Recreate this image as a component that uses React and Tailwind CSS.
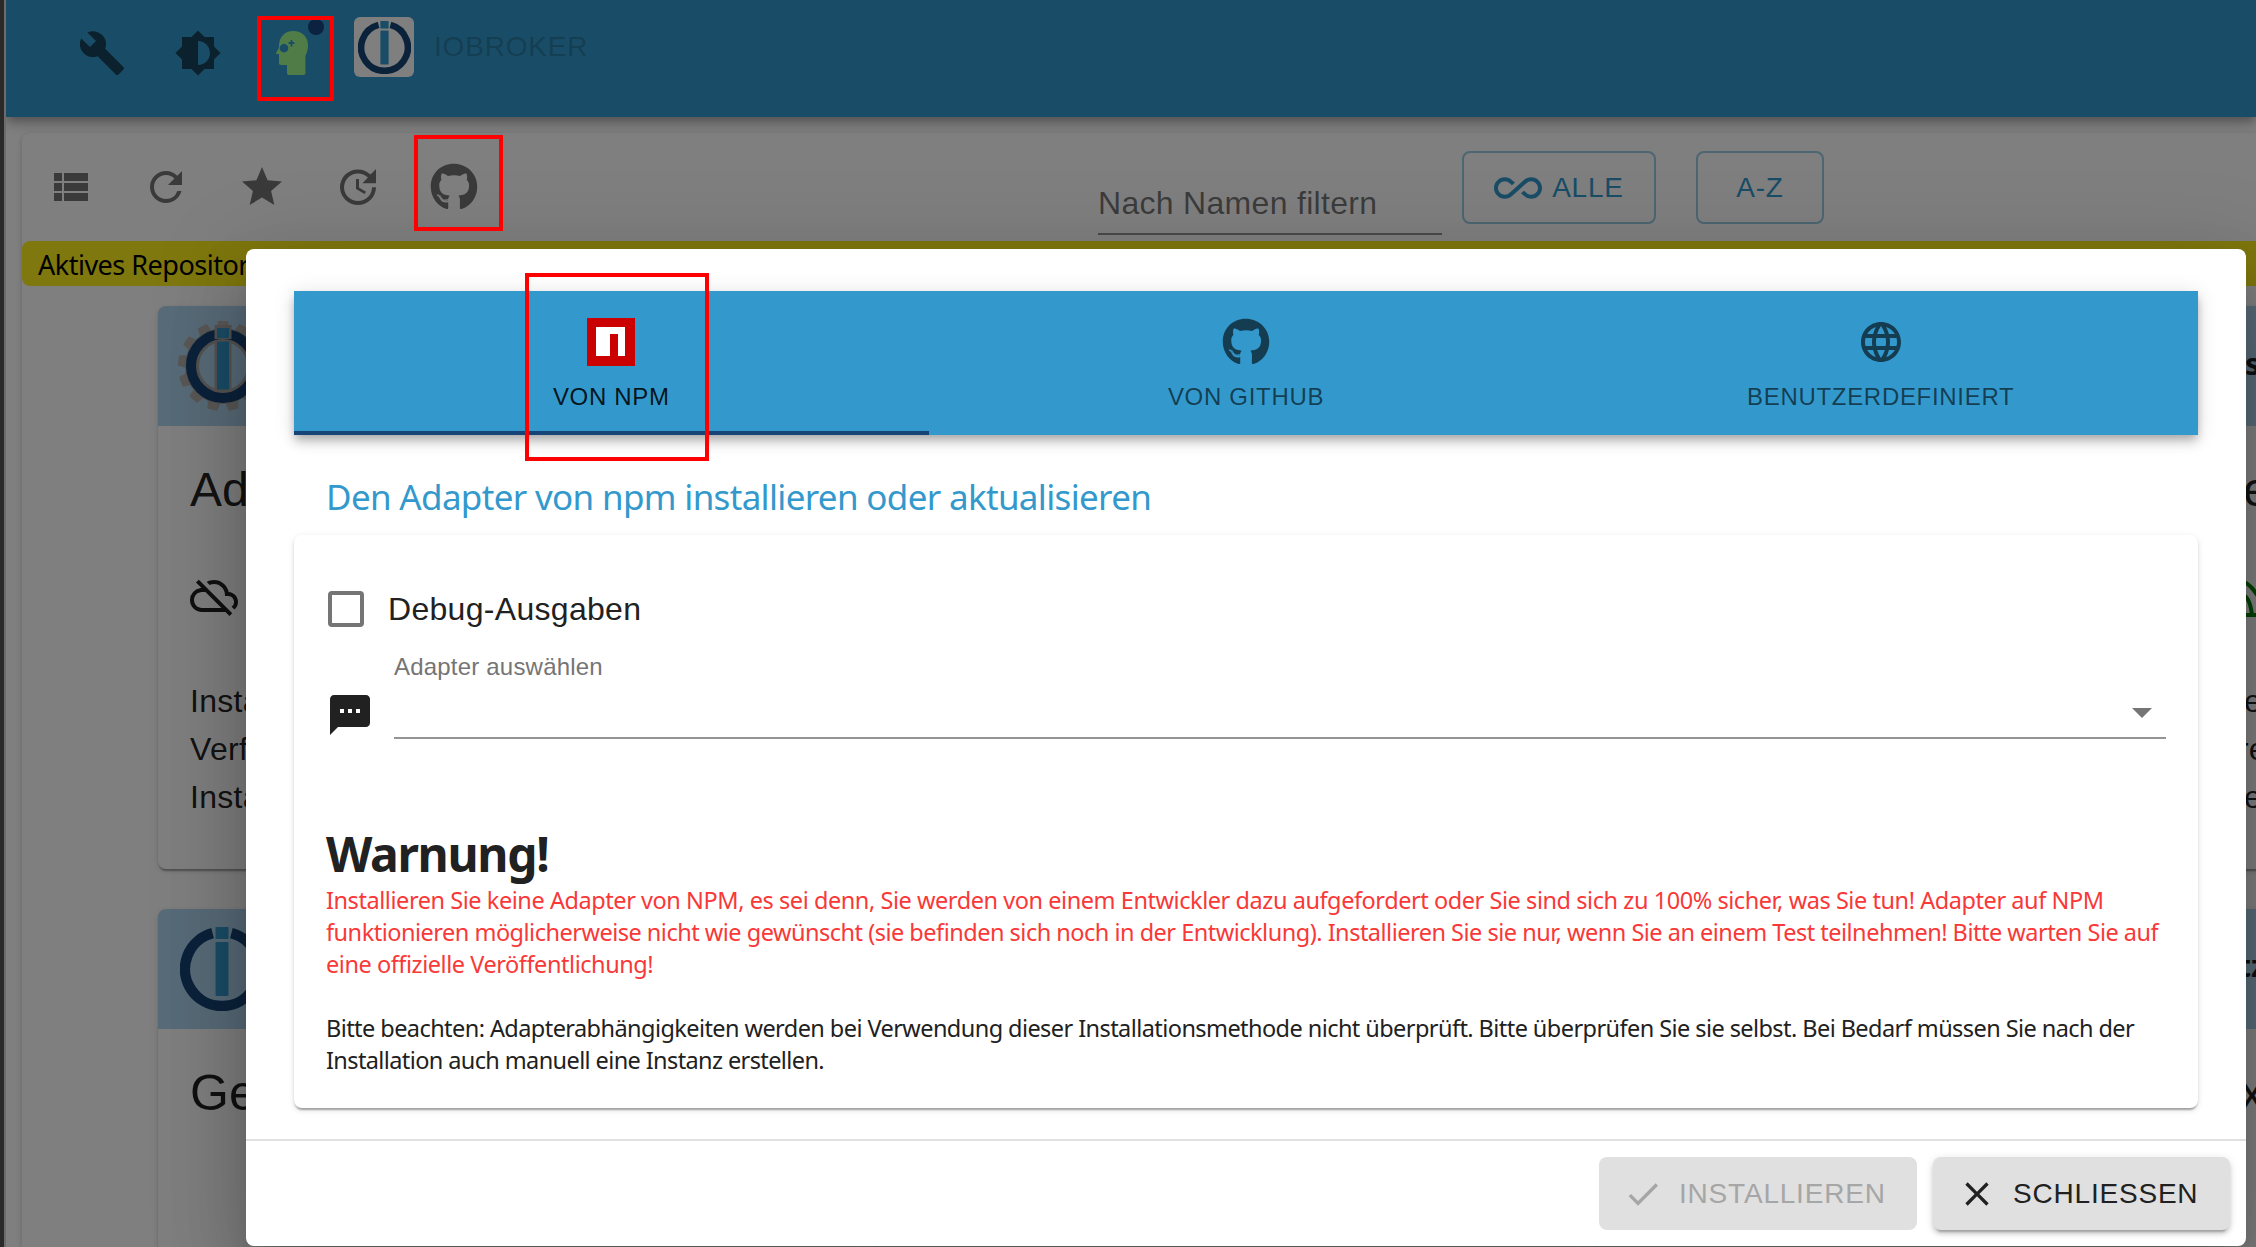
import React from "react";
import {
  MdBuild,
  MdBrightness6,
  MdRefresh,
  MdStar,
  MdUpdate,
  MdSms,
  MdLanguage,
  MdCheck,
  MdClose,
  MdAllInclusive,
  MdArrowDropDown,
  MdOutlineCloudOff,
} from "react-icons/md";
import { FaGithub } from "react-icons/fa";

const arial = "font-['Liberation_Sans',Arial,sans-serif]";
const segoe = "font-['Noto_Sans','Open_Sans',sans-serif]";

function Logo({ className }) {
  return (
    <svg viewBox="0 0 84 84" className={className}>
      <path d="M32.6 6.2A37 37 0 1 0 51.4 6.2" fill="none" stroke="#164477" strokeWidth="10.5" />
      <rect x="35.5" y="0" width="13" height="12" fill="#3399cc" />
      <rect x="35.5" y="15" width="13" height="54" rx="1" fill="#3399cc" />
    </svg>
  );
}

function GearLogo({ className }) {
  const teeth = Array.from({ length: 13 }, (_, i) => (i * 360) / 13);
  return (
    <svg viewBox="0 0 92 92" className={className}>
      <g fill="#b4b0ae">
        {teeth.map((a) => (
          <path key={a} d="M39 12l2-11h10l2 11z" transform={`rotate(${a} 46 46)`} />
        ))}
      </g>
      <circle cx="46" cy="46" r="30" fill="none" stroke="#a8a6a5" strokeWidth="16" />
      <circle cx="46" cy="46" r="24" fill="#b0d7f0" />
      <circle cx="46" cy="46" r="32" fill="none" stroke="#164477" strokeWidth="10" />
      <rect x="37.5" y="5" width="17" height="14" fill="#a8a6a5" />
      <rect x="40" y="8" width="12" height="10" fill="#3399cc" />
      <rect x="37.5" y="20" width="17" height="52" fill="#a8a6a5" />
      <rect x="40" y="21.5" width="12" height="48" fill="#3399cc" />
    </svg>
  );
}

function ExpertIcon() {
  return (
    <svg viewBox="0 0 32 44" className="h-[44px] w-8">
      <path
        fillRule="evenodd"
        fill="#a0f890"
        d="M3 15C3 6 9 0 17 0c9 0 15 6 15 14 0 4-.8 7-2.600 11v17c0 1.300-.7 2-2 2H13c-1.300 0-2-.7-2-2v-8H5c-1.300 0-2-.7-2-2v-9H.6C0 23 0 22.600 0 22l2.600-4.500zM8 12.800a4.300 4.300 0 1 0 .01 0zM14.600 9v2h-2v2h2v2.500h1.800V13h2v-2h-2V9z"
      />
    </svg>
  );
}

function ViewList() {
  return (
    <svg viewBox="0 0 24 24" className="size-12" fill="currentColor">
      <path d="M4 14h4v-4H4v4zm0 5h4v-4H4v4zM4 9h4V5H4v4zm5 5h12v-4H9v4zm0 5h12v-4H9v4zM9 5v4h12V5H9z" />
    </svg>
  );
}

function Wifi({ className }) {
  return (
    <svg viewBox="0 0 40 40" className={className} fill="none" stroke="#008000" strokeWidth="4">
      <path d="M4 2.500q8 1 18 18M4 15q8 3 10 21M-3 36h43" />
    </svg>
  );
}

const cardShadow =
  "shadow-[0_4px_2px_-2px_rgba(0,0,0,0.2),0_2px_2px_0_rgba(0,0,0,0.14),0_2px_6px_0_rgba(0,0,0,0.12)]";

function AdapterCard({ logo, head, title, children }) {
  return (
    <div className={`h-[563px] overflow-hidden rounded-lg bg-white ${cardShadow}`}>
      <div className="flex h-[120px] items-center bg-[#b0d7f0] pl-[18px]">
        {logo}
        {head}
      </div>
      {title}
      {children}
    </div>
  );
}

function FilterButton({ className, children }) {
  return (
    <div
      className={`flex h-[73px] items-center justify-center gap-2.5 rounded-lg border-2 border-[#3399cc]/50 text-[28px] tracking-[0.8px] text-[#3399cc] ${className}`}
    >
      {children}
    </div>
  );
}

function Tab({ icon, label, active }) {
  return (
    <div className={`flex flex-1 flex-col items-center border-b-4 pt-[26px] ${active ? "border-[#164477] text-black/87" : "border-transparent text-black/60"}`}>
      <div className="flex size-[50px] items-center justify-center">{icon}</div>
      <div className="mt-[15px] text-2xl leading-[30px] tracking-[0.69px]">{label}</div>
    </div>
  );
}

function Background() {
  return (
    <div className={`flex h-full w-full flex-col bg-white ${arial}`}>
      <header className="z-10 flex h-[117px] shrink-0 bg-[#3399cc] pl-[72px] shadow-[0_4px_8px_-2px_rgba(0,0,0,0.2),0_8px_10px_0_rgba(0,0,0,0.14),0_2px_20px_0_rgba(0,0,0,0.12)]">
        <div className="mt-[29px] flex h-12 w-[198px] shrink-0 gap-12 text-black/55">
          <MdBuild className="size-12" />
          <MdBrightness6 className="size-12" />
        </div>
        <div className="mt-[31px] w-[78px] shrink-0">
          <ExpertIcon />
        </div>
        <div className="mt-[17px] flex size-[60px] shrink-0 items-center justify-center rounded-md bg-white">
          <Logo className="size-[53px]" />
        </div>
        <div className="mt-[31px] ml-5 text-[28px] leading-8 tracking-[0.8px] text-black/20">IOBROKER</div>
      </header>
      <main className="mt-4 ml-4 flex min-h-0 flex-1 flex-col rounded-tl-lg bg-white shadow-[0_2px_6px_rgba(0,0,0,0.2)]">
        <div className="flex h-[108px] shrink-0 pl-6">
          <div className="mt-[30px] flex w-[1052px] shrink-0 gap-12 text-black/54">
            <ViewList />
            <MdRefresh className="size-12" />
            <MdStar className="size-12" />
            <MdUpdate className="size-12" />
            <FaGithub className="size-12" />
          </div>
          <div className="mt-[50px] h-[52px] w-[344px] border-b-2 border-black/42 text-[32px] leading-10 tracking-[0.3px] text-black/54">
            Nach Namen filtern
          </div>
          <FilterButton className="mt-[18px] ml-5 w-[194px]">
            <MdAllInclusive className="size-12" />
            ALLE
          </FilterButton>
          <FilterButton className="mt-[18px] ml-10 w-[128px]">A-Z</FilterButton>
        </div>
        <div className={`h-[45px] shrink-0 rounded-l-lg bg-[#fff01c] pl-4 text-[27px] leading-[48px] tracking-[-0.5px] text-black ${segoe}`}>
          Aktives Repository
        </div>
        <div className="mt-5 ml-[136px] grid grid-cols-[704px_704px_704px] gap-x-4 gap-y-10">
          <AdapterCard
            logo={<GearLogo className="ml-px size-[92px]" />}
            title={<div className="mt-8 ml-8 text-[48px] leading-[64px] text-black/87">Ad</div>}
          >
            <MdOutlineCloudOff className="mt-[50px] ml-8 size-12 text-black/87" />
            <div className="mt-[57px] ml-8 w-60 text-[32px] leading-[48px] tracking-[0.3px] text-black/87">
              <div>Insta</div>
              <div>Verf</div>
              <div>Insta</div>
            </div>
          </AdapterCard>
          <AdapterCard />
          <AdapterCard
            head={<div className={`-mt-1.5 ml-[629px] text-[30px] font-bold text-black/87 ${segoe}`}>st</div>}
            title={<div className="mt-8 ml-[645px] text-[48px] leading-[64px] text-black/87">e</div>}
          >
            <Wifi className="mt-[57px] ml-[640px] size-10" />
            <div className="mt-[58px] ml-[646px] text-[32px] leading-[48px] text-black/87">
              <div>e</div>
              <div className="-ml-1.5">re</div>
              <div>e</div>
            </div>
          </AdapterCard>
          <AdapterCard
            logo={<Logo className="ml-1 size-[84px]" />}
            title={<div className="mt-[22px] ml-8 text-[50px] leading-[84px] text-black/87">Ge</div>}
          />
          <AdapterCard />
          <AdapterCard
            head={<div className={`-mt-2 ml-[622px] text-[30px] font-bold text-black/87 ${segoe}`}>tz</div>}
            title={<div className="mt-[22px] ml-[642px] text-[48px] leading-[84px] text-black/87">x</div>}
          />
        </div>
      </main>
    </div>
  );
}

const buttonBase = "flex h-[73px] items-center rounded-lg bg-[#e0e0e0] text-[28px] tracking-[0.8px]";

function InstallDialog() {
  return (
    <div
      className={`absolute top-[249px] left-[242px] flex h-[997px] w-[2000px] flex-col rounded-lg bg-white text-[#212121] shadow-[0_22px_30px_-14px_rgba(0,0,0,0.2),0_48px_76px_6px_rgba(0,0,0,0.14),0_18px_92px_16px_rgba(0,0,0,0.12)] ${arial}`}
    >
      <div className="flex h-[890px] flex-col px-12 pt-[42px]">
        <div className="flex h-[144px] shrink-0 bg-[#3399cc] shadow-[0_4px_8px_-2px_rgba(0,0,0,0.2),0_8px_10px_0_rgba(0,0,0,0.14),0_2px_20px_0_rgba(0,0,0,0.12)]">
          <Tab
            active
            label="VON NPM"
            icon={
              <svg viewBox="0 0 48 48" className="size-12">
                <path fill="#cb0000" d="M0 0h48v48H0z" />
                <path fill="#fff" d="M9 9h29v29h-7V16h-8v22H9z" />
              </svg>
            }
          />
          <Tab label="VON GITHUB" icon={<FaGithub className="size-12" />} />
          <Tab label="BENUTZERDEFINIERT" icon={<MdLanguage className="size-12" />} />
        </div>
        <h2 className={`mt-[38px] ml-8 text-[35px] leading-[48px] tracking-[-0.67px] whitespace-nowrap text-[#3399cc] ${segoe}`}>
          Den Adapter von npm installieren oder aktualisieren
        </h2>
        <section className={`mt-[14px] h-[573px] rounded-lg bg-white pt-14 pr-8 pl-8 ${cardShadow}`}>
          <div className="flex h-9 items-center pl-0.5">
            <div className="size-9 rounded-[4px] border-4 border-[#757575]" />
            <div className="ml-6 text-[32px] leading-9 tracking-[0.3px]">Debug-Ausgaben</div>
          </div>
          <div className="mt-[26px] flex">
            <MdSms className="mt-[38px] size-12" />
            <div className="ml-5 h-[86px] w-[1772px] border-b-2 border-[#949494]">
              <div className="text-2xl leading-[28px] tracking-[0.2px] text-[#757575]">Adapter auswählen</div>
              <div className="mt-[7px] flex justify-end">
                <MdArrowDropDown className="size-12 text-[#757575]" />
              </div>
            </div>
          </div>
          <div className={`mt-[83px] text-[48px] leading-[64px] font-bold tracking-[-1.35px] ${segoe}`}>Warnung!</div>
          <div className={`-mt-0.5 text-[23.5px] leading-8 whitespace-nowrap ${segoe}`}>
            <div className="text-[#f93838]">
              <div className="tracking-[-0.44px]">
                Installieren Sie keine Adapter von NPM, es sei denn, Sie werden von einem Entwickler dazu aufgefordert oder Sie sind sich zu 100% sicher, was Sie tun! Adapter auf NPM
              </div>
              <div className="tracking-[-0.5px]">
                funktionieren möglicherweise nicht wie gewünscht (sie befinden sich noch in der Entwicklung). Installieren Sie sie nur, wenn Sie an einem Test teilnehmen! Bitte warten Sie auf
              </div>
              <div className="tracking-[-0.45px]">eine offizielle Veröffentlichung!</div>
            </div>
            <div className="mt-8 tracking-[-0.57px]">
              Bitte beachten: Adapterabhängigkeiten werden bei Verwendung dieser Installationsmethode nicht überprüft. Bitte überprüfen Sie sie selbst. Bei Bedarf müssen Sie nach der
            </div>
            <div className="tracking-[-0.61px]">Installation auch manuell eine Instanz erstellen.</div>
          </div>
        </section>
      </div>
      <footer className="flex flex-1 justify-end gap-4 border-t-2 border-[#e0e0e0] pt-4 pr-4">
        <div className={`w-[318px] pl-6 text-[#a6a6a6] ${buttonBase}`}>
          <MdCheck className="mr-4 size-10" />
          INSTALLIEREN
        </div>
        <div
          className={`w-[297px] pl-6 shadow-[0_6px_2px_-4px_rgba(0,0,0,0.2),0_4px_4px_0_rgba(0,0,0,0.14),0_2px_10px_0_rgba(0,0,0,0.12)] ${buttonBase}`}
        >
          <MdClose className="mr-4 size-10" />
          SCHLIESSEN
        </div>
      </footer>
    </div>
  );
}

export default function App() {
  return (
    <div className="relative flex h-[1247px] w-[2256px] overflow-hidden">
      <div className="w-1 shrink-0 bg-[#2c2a29]" />
      <div className="relative flex min-w-0 flex-1 overflow-hidden">
        <div className="w-0.5 shrink-0 bg-[#d8d8d8]" />
        <div className="min-w-0 flex-1 overflow-hidden">
          <Background />
        </div>
        <div className="absolute inset-0 z-20 bg-black/50">
          <div className="absolute top-[19px] left-[304px] size-4 rounded-full bg-[#0b2240]" />
          <InstallDialog />
        </div>
      </div>
      <div className="absolute top-4 left-[257px] z-30 h-[85px] w-[77px] border-4 border-[#ff0000]" />
      <div className="absolute top-[135px] left-[414px] z-30 h-[96px] w-[89px] border-4 border-[#ff0000]" />
      <div className="absolute top-[273px] left-[525px] z-30 h-[188px] w-[184px] border-4 border-[#ff0000]" />
    </div>
  );
}
